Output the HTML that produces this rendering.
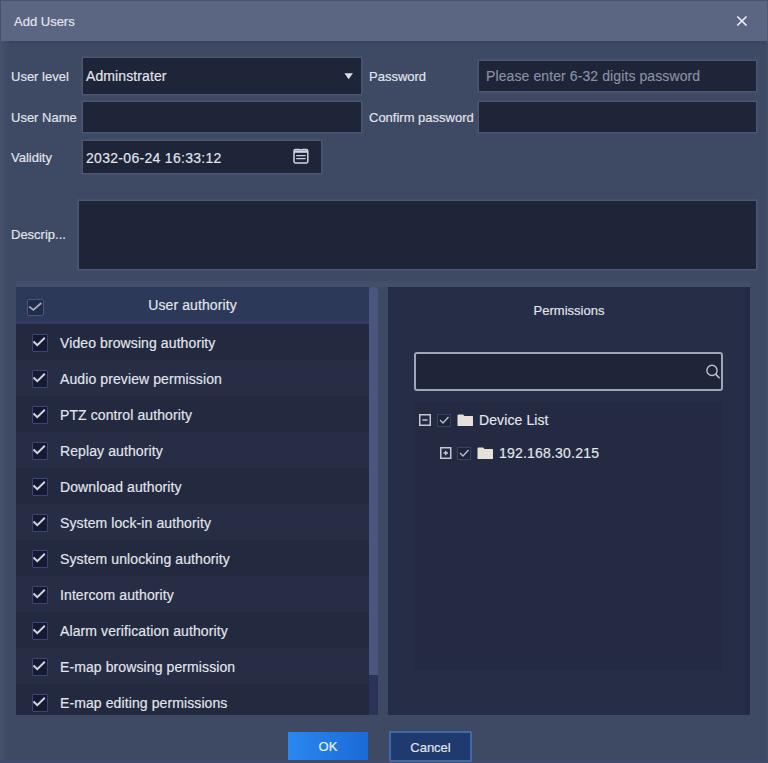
<!DOCTYPE html>
<html><head><meta charset="utf-8">
<style>
*{box-sizing:border-box;margin:0;padding:0}
html,body{width:768px;height:763px;overflow:hidden}
body{background:#3e4a63;font-family:"Liberation Sans",sans-serif;color:#e3e6ee;position:relative}
.t13,.t14{-webkit-text-stroke:0.15px currentColor}
.a{position:absolute}
.t13{font-size:13px;line-height:16px;white-space:nowrap}
.t14{font-size:14px;line-height:16px;white-space:nowrap;letter-spacing:0.1px}
#title{left:0;top:0;width:768px;height:41px;background:#5b6682;border-top:1px solid #4a5470}
.inp{background:#1f2538;box-shadow:0 0 0 1px #4b5673,0 0 0 2px #434f69}
.row{left:16px;width:353px;height:36px}
.row.odd{background:#232a40}
.row.even{background:#262d45}
.cb{position:absolute;left:16px;top:10px;width:16px;height:18px;border:1px solid #3c4474;background:#161b2f;border-radius:1px}
.cb svg{position:absolute;left:-1px;top:0px}
.row .lbl{position:absolute;left:44px;top:11px}
</style></head>
<body>
<div id="title" class="a"></div>
<div class="a" style="left:0;top:41px;width:768px;height:5px;background:linear-gradient(#38445c,#3e4a63)"></div>
<div class="a" style="left:0;top:0;width:1px;height:763px;background:#46526c"></div>
<div class="a" style="left:0;top:760px;width:768px;height:3px;background:linear-gradient(#3f4a66,#434d70)"></div>
<div class="a" style="left:766px;top:41px;width:2px;height:722px;background:#434e68"></div>
<div class="a" style="left:767px;top:0;width:1px;height:41px;background:#4e5974"></div>
<div class="a" style="left:1px;top:41px;width:8px;height:719px;background:linear-gradient(90deg,#44506a,#3e4a63)"></div>
<div class="a t13" style="left:14px;top:14px">Add Users</div>
<svg class="a" style="left:736px;top:15px" width="12" height="12" viewBox="0 0 12 12"><path d="M1.3 1.5L10.5 10.5M10.5 1.5L1.3 10.5" stroke="#eef0f6" stroke-width="1.7"/></svg>

<!-- row 1 -->
<div class="a t13" style="left:11px;top:69px">User level</div>
<div class="a inp" style="left:83px;top:58px;width:278px;height:36px"></div>
<div class="a t14" style="left:86px;top:68px">Adminstrater</div>
<svg class="a" style="left:344px;top:73px" width="10" height="7" viewBox="0 0 10 7"><path d="M0.4 0.3H8.9L4.65 6.2Z" fill="#dcdfe8"/></svg>
<div class="a t13" style="left:369px;top:69px">Password</div>
<div class="a inp" style="left:479px;top:61px;width:277px;height:30px"></div>
<div class="a t14" style="left:486px;top:68px;color:#8a91a5">Please enter 6-32 digits password</div>

<!-- row 2 -->
<div class="a t13" style="left:11px;top:110px">User Name</div>
<div class="a inp" style="left:83px;top:102px;width:278px;height:30px"></div>
<div class="a t13" style="left:369px;top:110px">Confirm password</div>
<div class="a inp" style="left:479px;top:102px;width:277px;height:30px"></div>

<!-- row 3 -->
<div class="a t13" style="left:11px;top:150px">Validity</div>
<div class="a inp" style="left:83px;top:141px;width:238px;height:32px"></div>
<div class="a t14" style="left:86px;top:150px;letter-spacing:0.3px">2032-06-24 16:33:12</div>
<svg class="a" style="left:292px;top:148px" width="18" height="17" viewBox="0 0 18 17"><path d="M2 3.2Q2 1.6 3.6 1.6H7.4Q9 2.6 10.6 1.6H14.2Q15.8 1.6 15.8 3.2V13.6Q15.8 14.9 14.5 14.9H3.3Q2 14.9 2 13.6Z" stroke="#d2d6e2" stroke-width="1.5" fill="none"/><path d="M2.2 3.6H15.6" stroke="#d2d6e2" stroke-width="2.4"/><path d="M4.2 7.7H13.6M4.2 10.6H13.6" stroke="#cdd1de" stroke-width="1.3"/></svg>

<!-- description -->
<div class="a t13" style="left:11px;top:227px">Descrip...</div>
<div class="a inp" style="left:79px;top:201px;width:677px;height:68px;box-shadow:0 0 0 1px #4d5673,0 0 0 2px #46506c"></div>

<!-- left panel -->
<div class="a" style="left:16px;top:281px;width:734px;height:6px;background:linear-gradient(#424e67,#44506a)"></div>
<div class="a" style="left:16px;top:287px;width:353px;height:35px;background:#2d3959"></div>
<div class="a" style="left:16px;top:321px;width:353px;height:3px;background:#353c63"></div>
<div class="a" style="left:27px;top:299px;width:17px;height:17px;border:1.5px solid #4a5578;border-radius:2px;background:#222b48"></div><svg class="a" style="left:27px;top:299px" width="17" height="17" viewBox="0 0 17 17"><path d="M2.2 7.6L6.4 10.9L14.3 4" stroke="#a8b0c8" stroke-width="1.7" fill="none"/></svg>
<div class="a t14" style="left:16px;top:297px;width:353px;text-align:center">User authority</div>
<div class="a" style="left:369px;top:287px;width:9px;height:388px;background:#4a5580;border-radius:4px 4px 0 0"></div>
<div class="a" style="left:369px;top:675px;width:9px;height:40px;background:#2b3458"></div>

<div class="a" style="left:16px;top:324px;width:353px;height:391px;overflow:hidden">
<div class="a row odd" style="left:0;top:0px"><div class="cb"><svg width="14" height="14" viewBox="0 0 14 14"><path d="M1.5 6.5L5.3 10.2L12.8 2.8" stroke="#d0d4e6" stroke-width="2" fill="none"/></svg></div><div class="lbl t14">Video browsing authority</div></div>
<div class="a row even" style="left:0;top:36px"><div class="cb"><svg width="14" height="14" viewBox="0 0 14 14"><path d="M1.5 6.5L5.3 10.2L12.8 2.8" stroke="#d0d4e6" stroke-width="2" fill="none"/></svg></div><div class="lbl t14">Audio preview permission</div></div>
<div class="a row odd" style="left:0;top:72px"><div class="cb"><svg width="14" height="14" viewBox="0 0 14 14"><path d="M1.5 6.5L5.3 10.2L12.8 2.8" stroke="#d0d4e6" stroke-width="2" fill="none"/></svg></div><div class="lbl t14">PTZ control authority</div></div>
<div class="a row even" style="left:0;top:108px"><div class="cb"><svg width="14" height="14" viewBox="0 0 14 14"><path d="M1.5 6.5L5.3 10.2L12.8 2.8" stroke="#d0d4e6" stroke-width="2" fill="none"/></svg></div><div class="lbl t14">Replay authority</div></div>
<div class="a row odd" style="left:0;top:144px"><div class="cb"><svg width="14" height="14" viewBox="0 0 14 14"><path d="M1.5 6.5L5.3 10.2L12.8 2.8" stroke="#d0d4e6" stroke-width="2" fill="none"/></svg></div><div class="lbl t14">Download authority</div></div>
<div class="a row even" style="left:0;top:180px"><div class="cb"><svg width="14" height="14" viewBox="0 0 14 14"><path d="M1.5 6.5L5.3 10.2L12.8 2.8" stroke="#d0d4e6" stroke-width="2" fill="none"/></svg></div><div class="lbl t14">System lock-in authority</div></div>
<div class="a row odd" style="left:0;top:216px"><div class="cb"><svg width="14" height="14" viewBox="0 0 14 14"><path d="M1.5 6.5L5.3 10.2L12.8 2.8" stroke="#d0d4e6" stroke-width="2" fill="none"/></svg></div><div class="lbl t14">System unlocking authority</div></div>
<div class="a row even" style="left:0;top:252px"><div class="cb"><svg width="14" height="14" viewBox="0 0 14 14"><path d="M1.5 6.5L5.3 10.2L12.8 2.8" stroke="#d0d4e6" stroke-width="2" fill="none"/></svg></div><div class="lbl t14">Intercom authority</div></div>
<div class="a row odd" style="left:0;top:288px"><div class="cb"><svg width="14" height="14" viewBox="0 0 14 14"><path d="M1.5 6.5L5.3 10.2L12.8 2.8" stroke="#d0d4e6" stroke-width="2" fill="none"/></svg></div><div class="lbl t14">Alarm verification authority</div></div>
<div class="a row even" style="left:0;top:324px"><div class="cb"><svg width="14" height="14" viewBox="0 0 14 14"><path d="M1.5 6.5L5.3 10.2L12.8 2.8" stroke="#d0d4e6" stroke-width="2" fill="none"/></svg></div><div class="lbl t14">E-map browsing permission</div></div>
<div class="a row odd" style="left:0;top:360px"><div class="cb"><svg width="14" height="14" viewBox="0 0 14 14"><path d="M1.5 6.5L5.3 10.2L12.8 2.8" stroke="#d0d4e6" stroke-width="2" fill="none"/></svg></div><div class="lbl t14">E-map editing permissions</div></div>
</div>

<!-- right panel -->
<div class="a" style="left:388px;top:287px;width:362px;height:428px;background:#262d47"></div>
<div class="a t13" style="left:388px;top:303px;width:362px;text-align:center">Permissions</div>
<div class="a" style="left:745px;top:287px;width:5px;height:428px;background:#242a43"></div>
<div class="a" style="left:414px;top:352px;width:309px;height:39px;border:2px solid #9fa6ba;border-radius:3px;background:#1f2538"></div>
<svg class="a" style="left:702px;top:361px" width="20" height="20" viewBox="0 0 20 20"><circle cx="10" cy="9.4" r="5.1" stroke="#bcc0ce" stroke-width="1.4" fill="none"/><path d="M13.7 13.1L17.6 17.2" stroke="#bcc0ce" stroke-width="1.6"/></svg>
<div class="a" style="left:415px;top:402px;width:307px;height:268px;background:#232a42"></div>
<svg class="a" style="left:418px;top:413px" width="14" height="14" viewBox="0 0 14 14"><rect x="1.75" y="1.75" width="10.5" height="10.5" stroke="#c4c8d6" stroke-width="1.5" fill="none"/><path d="M4.5 7H9.5" stroke="#c4c8d6" stroke-width="1.5"/></svg>
<div class="a" style="left:437px;top:414px;width:14px;height:13px;border:1px solid #3a4262;background:#1d2338"></div>
<svg class="a" style="left:437px;top:413px" width="14" height="14" viewBox="0 0 14 14"><path d="M3 7L6 10L11.5 4" stroke="#b8bdd0" stroke-width="1.4" fill="none"/></svg>
<svg class="a" style="left:457px;top:414px" width="17" height="13" viewBox="0 0 17 13"><path d="M0.5 1.5Q0.5 0.5 1.5 0.5H6L7.5 2H15.5Q16 2 16 2.5V11.5Q16 12 15.5 12H1Q0.5 12 0.5 11.5Z" fill="#e6e2da"/></svg>
<div class="a t14" style="left:479px;top:412px">Device List</div>

<svg class="a" style="left:439px;top:446px" width="14" height="14" viewBox="0 0 14 14"><rect x="1.75" y="1.75" width="10" height="10.5" stroke="#c4c8d6" stroke-width="1.5" fill="none"/><path d="M4.5 7H9M6.75 4.75V9.25" stroke="#c4c8d6" stroke-width="1.4"/></svg>
<div class="a" style="left:457px;top:447px;width:14px;height:13px;border:1px solid #3a4262;background:#1d2338"></div>
<svg class="a" style="left:457px;top:446px" width="14" height="14" viewBox="0 0 14 14"><path d="M3 7L6 10L11.5 4" stroke="#b8bdd0" stroke-width="1.4" fill="none"/></svg>
<svg class="a" style="left:477px;top:447px" width="17" height="13" viewBox="0 0 17 13"><path d="M0.5 1.5Q0.5 0.5 1.5 0.5H6L7.5 2H15.5Q16 2 16 2.5V11.5Q16 12 15.5 12H1Q0.5 12 0.5 11.5Z" fill="#e6e2da"/></svg>
<div class="a t14" style="left:499px;top:445px;letter-spacing:0.2px">192.168.30.215</div>

<!-- buttons -->
<div class="a t13" style="left:288px;top:732px;width:80px;height:28px;background:linear-gradient(90deg,#2a88f0,#1b6ad6);color:#eef4ff;text-align:center;line-height:30px">OK</div>
<div class="a t13" style="left:389px;top:731px;width:83px;height:31px;background:#1f3a6e;border:2px solid #4268aa;border-radius:1px;text-align:center;line-height:29px">Cancel</div>
</body></html>
